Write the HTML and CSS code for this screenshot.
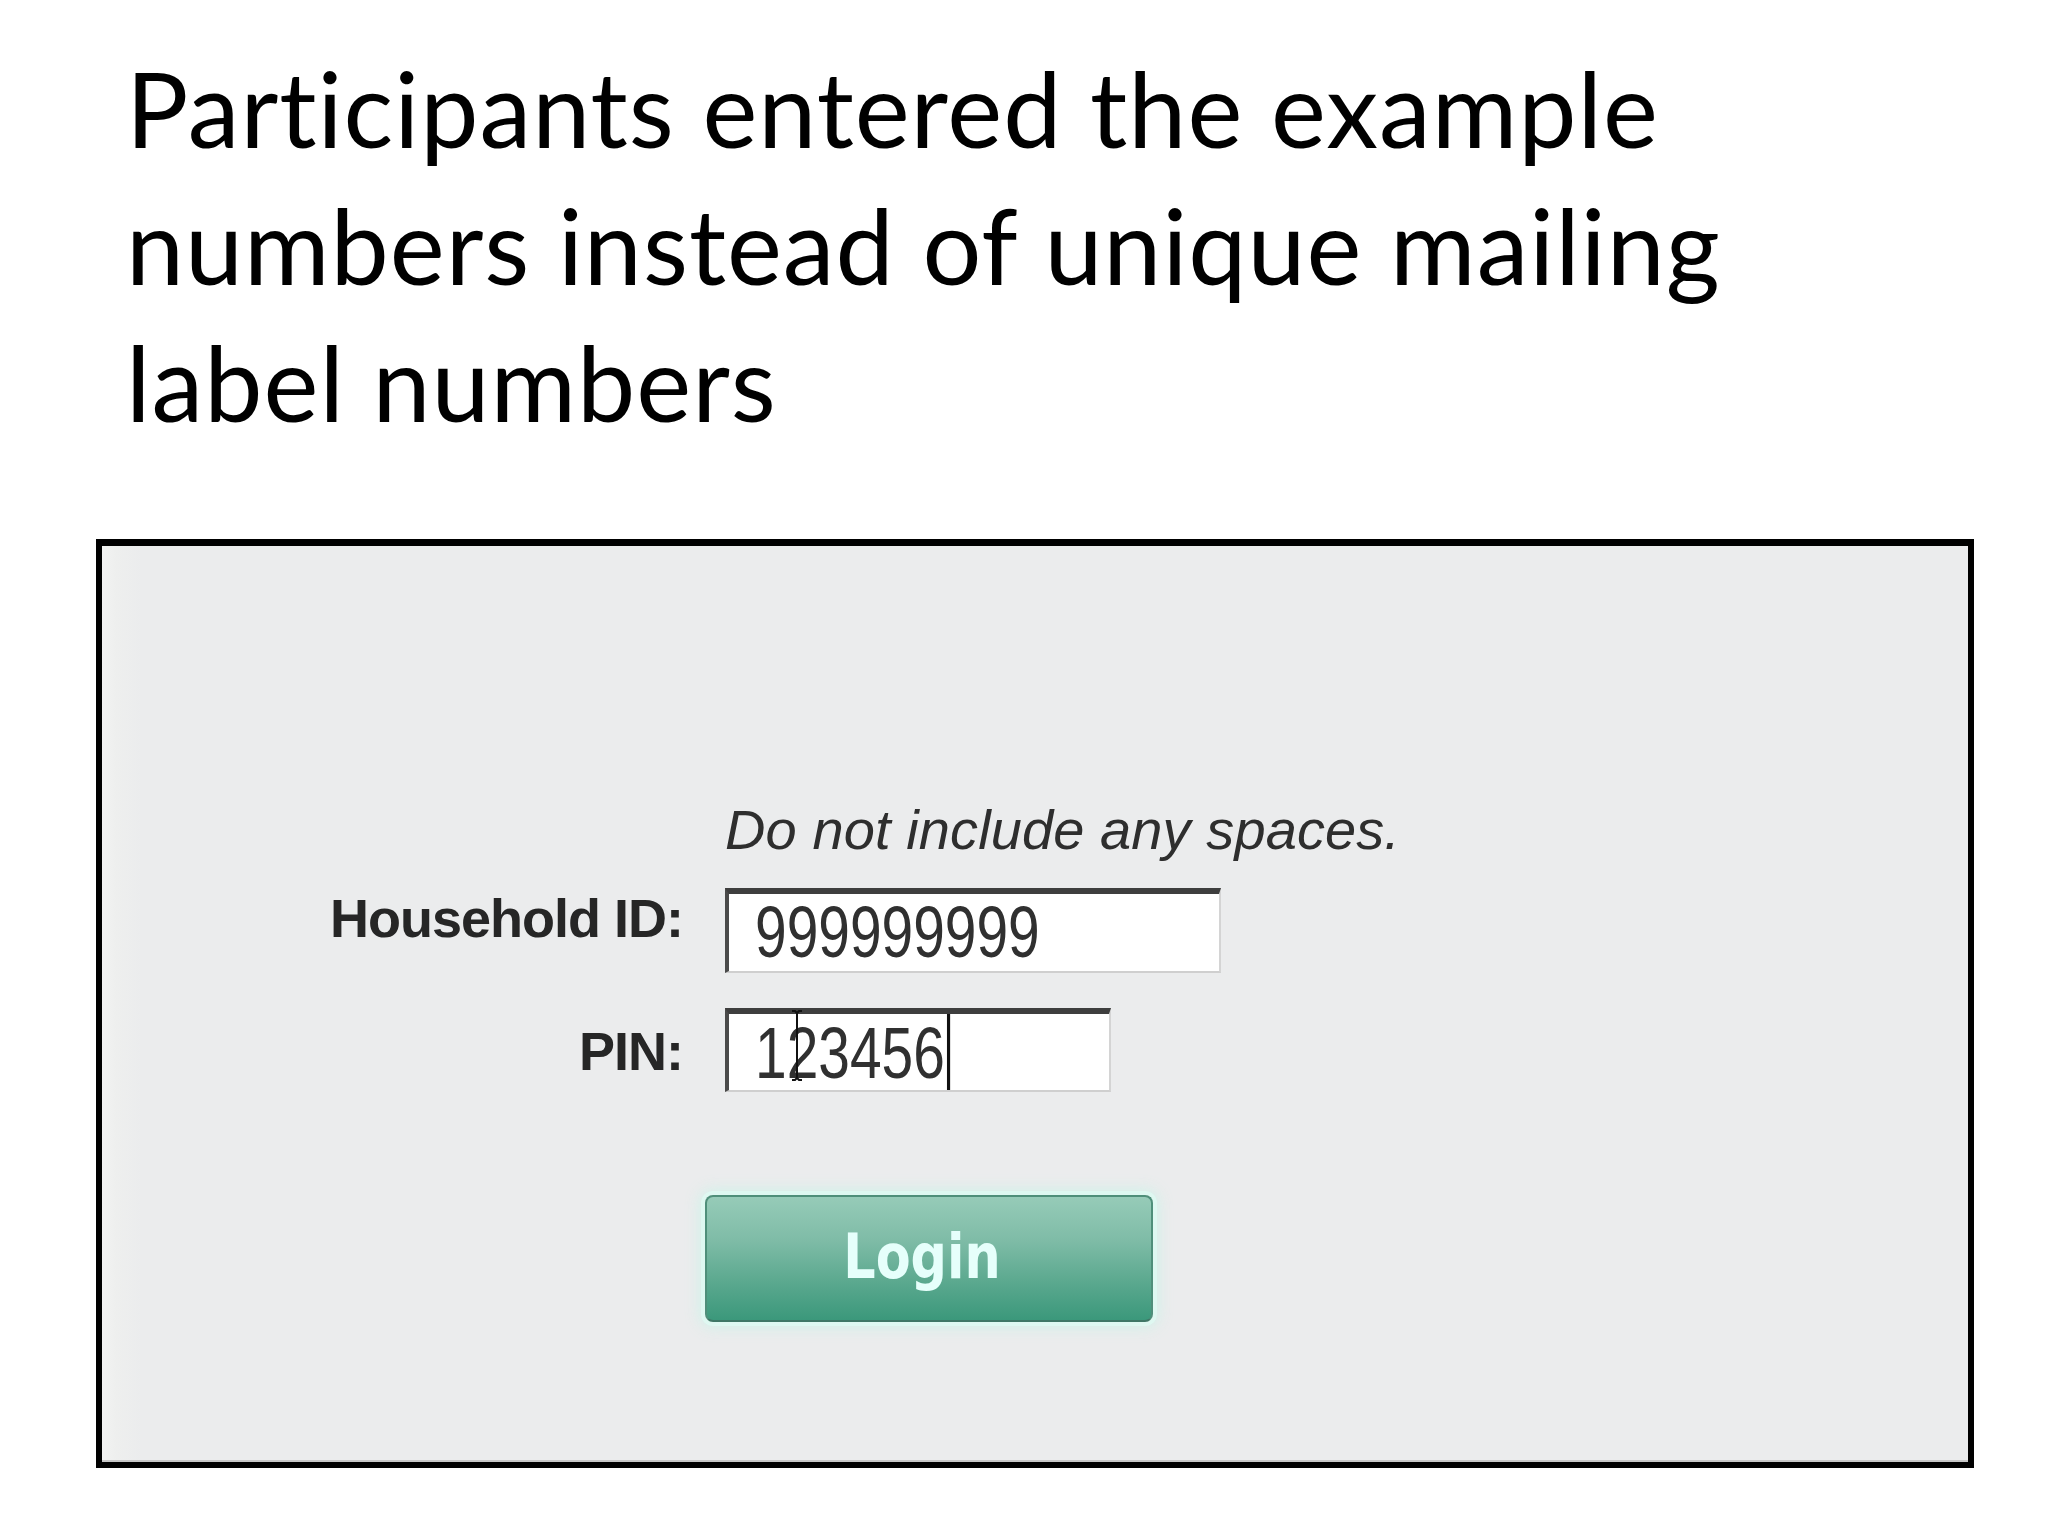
FILE: index.html
```html
<!DOCTYPE html>
<html lang="en">
<head>
<meta charset="utf-8">
<title>Participants entered the example numbers</title>
<link rel="stylesheet" href="styles.css">
</head>
<body>
<h1 class="title">Participants entered the example numbers instead of unique mailing label numbers</h1>
<div class="panel">
  <div class="form">
    <div class="hint">Do not include any spaces.</div>
    <label class="label label-id">Household ID:</label>
    <div class="field field-id"><span class="digits">999999999</span></div>
    <label class="label label-pin">PIN:</label>
    <div class="field field-pin"><span class="digits">123456<span class="caret"></span></span>
      <svg class="ibeam" width="16" height="72" viewBox="0 0 16 72"><path d="M3 1h3l2 2 2-2h3M8 3v64M3 70h3l2-2 2 2h3" fill="none" stroke="#111" stroke-width="2"/></svg>
    </div>
    <div class="btn-row"><button class="btn" type="button"><span class="btn-text">Login</span></button></div>
  </div>
</div>
</body>
</html>
```
FILE: styles.css
```css
html, body {
  margin: 0;
  padding: 0;
  background: #ffffff;
}

.title {
  margin: 39px 0 0 0;
  padding-left: 126px;
  width: 1800px;
  font-family: Lato, "Open Sans", sans-serif;
  font-weight: 400;
  font-size: 104px;
  line-height: 137px;
  letter-spacing: 1px;
  font-variant-ligatures: none;
  font-feature-settings: "liga" 0, "clig" 0;
  color: #000;
}

.panel {
  box-sizing: border-box;
  margin: 89px 0 0 96px;
  width: 1878px;
  height: 929px;
  border: 6px solid #000;
  border-top-width: 7px;
  background: linear-gradient(to right, #f2f3f2 0, #eeefee 14px, #ebeced 40px, #ebeced 100%);
  box-shadow: inset 0 -2px 0 #c6c6c6;
  padding-top: 254px;
}

.form {
  display: grid;
  grid-template-columns: 581px 1fr;
  column-gap: 42px;
  font-family: "Liberation Sans", Arial, sans-serif;
}

.hint {
  grid-column: 2;
  font-style: italic;
  font-size: 56px;
  line-height: 60px;
  color: #2e2e2e;
  letter-spacing: 0.1px;
}

.label {
  grid-column: 1;
  text-align: right;
  font-weight: 700;
  font-size: 54px;
  line-height: 60px;
  letter-spacing: -1px;
  color: #262626;
  align-self: start;
}

.label-id { margin-top: 28px; }
.label-pin { margin-top: 35px; padding-top: 13px; }

.field {
  grid-column: 2;
  position: relative;
  box-sizing: border-box;
  background: #fff;
  border-top: 6px solid #3e3e3e;
  border-left: 4px solid #4a4a4a;
  border-right: 2px solid #d4d4d4;
  border-bottom: 2px solid #cfcfcf;
  padding-left: 26px;
  line-height: 77px;
  white-space: nowrap;
}

.field-id {
  margin-top: 28px;
  width: 496px;
  height: 85px;
}

.field-pin {
  margin-top: 35px;
  width: 386px;
  height: 84px;
}

.digits {
  display: inline-block;
  font-family: "Liberation Sans", Arial, sans-serif;
  font-size: 72px;
  color: #303030;
  transform: scaleX(0.79);
  transform-origin: left center;
}

.caret {
  display: inline-block;
  width: 4px;
  height: 76px;
  margin-left: 3px;
  background: #111;
  vertical-align: -12px;
}

.ibeam {
  position: absolute;
  left: 60px;
  top: -4px;
}

.btn-row {
  grid-column: 2;
  margin-top: 103px;
}

.btn {
  display: flex;
  align-items: center;
  justify-content: center;
  box-sizing: border-box;
  margin-left: -20px;
  width: 448px;
  height: 127px;
  padding: 0 14px 4px 0;
  border: 2px solid #4f8f7a;
  border-bottom-color: #3f7766;
  border-radius: 8px;
  background: linear-gradient(#96cbb8 0%, #7fbca7 35%, #5aa88e 70%, #3b987b 100%);
  box-shadow: 0 0 0 4px rgba(222, 248, 241, 0.95), 0 0 14px 6px rgba(205, 242, 232, 0.8);
  font-family: "DejaVu Sans", "Liberation Sans", sans-serif;
  font-weight: 700;
  font-size: 62px;
  color: #e6fffb;
  cursor: pointer;
}

.btn-text {
  display: inline-block;
  transform: scaleX(0.82);
}
```
